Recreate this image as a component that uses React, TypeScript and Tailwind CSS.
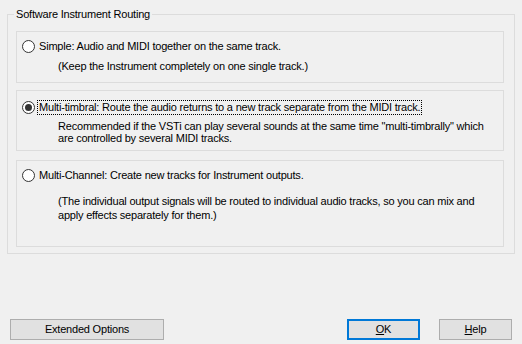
import React from 'react';

const Radio = ({ checked }: { checked?: boolean }) => (
  <svg width="13" height="13" viewBox="0 0 13 13" className="shrink-0">
    <circle cx="6.5" cy="6.5" r="6" fill="#ffffff" stroke="#333333" strokeWidth="1" />
    {checked && <circle cx="6.5" cy="6.5" r="3.5" fill="#333333" />}
  </svg>
);

const OptionBox = ({
  label,
  checked,
  focused,
  className,
  children,
}: {
  label: string;
  checked?: boolean;
  focused?: boolean;
  className: string;
  children: React.ReactNode;
}) => (
  <div className={`w-[488px] border border-[#dcdcdc] pl-[5px] ${className}`}>
    <div className="flex h-[15px] items-center gap-[2px]">
      <Radio checked={checked} />
      <span
        className={`leading-[13px] ${focused ? 'border border-dotted border-black px-[1px]' : 'border border-transparent px-[1px]'}`}
      >
        {label}
      </span>
    </div>
    {children}
  </div>
);

const Button = ({
  children,
  className,
}: {
  children: React.ReactNode;
  className: string;
}) => (
  <button
    className={`flex h-[21px] items-center justify-center bg-[#e1e1e1] text-black ${className}`}
  >
    {children}
  </button>
);

const App = () => {
  return (
    <div
      className="flex h-[344px] w-[522px] flex-col bg-[#f0f0f0] text-[11px] tracking-[-0.2px] text-black"
      style={{ fontFamily: '"Liberation Sans", Arial, sans-serif' }}
    >
      <fieldset className="mx-[7px] mt-[7px] h-[247px] border border-[#dcdcdc] pl-[8px]">
        <legend className="-ml-[2px] px-[2px] leading-[14px]">Software Instrument Routing</legend>
        <OptionBox label="Simple: Audio and MIDI together on the same track." className="mt-[10px] h-[52px] pt-[7px]">
          <p className="mt-[6px] pl-[36px] leading-[13px]">
            (Keep the Instrument completely on one single track.)
          </p>
        </OptionBox>
        <OptionBox
          label="Multi-timbral: Route the audio returns to a new track separate from the MIDI track."
          checked
          focused
          className="mt-[7px] h-[61px] pt-[9px]"
        >
          <p className="mt-[5px] pl-[36px] pr-[10px] leading-[12px]">
            Recommended if the VSTi can play several sounds at the same time "multi-timbrally" which are controlled by
            several MIDI tracks.
          </p>
        </OptionBox>
        <OptionBox
          label="Multi-Channel: Create new tracks for Instrument outputs."
          className="mt-[9px] h-[87px] pt-[7px]"
        >
          <p className="mt-[11px] pl-[36px] pr-[10px] leading-[14px]">
            (The individual output signals will be routed to individual audio tracks, so you can mix and apply effects
            separately for them.)
          </p>
        </OptionBox>
      </fieldset>
      <div className="flex-1" />
      <div className="mb-[4px] flex px-[10px]">
        <Button className="w-[154px] border border-[#adadad]">Extended Options</Button>
        <Button className="ml-auto w-[73px] border-2 border-[#0078d7]">
          <span className="underline">O</span>K
        </Button>
        <Button className="ml-[19px] w-[73px] border border-[#adadad]">
          <span className="underline">H</span>elp
        </Button>
      </div>
    </div>
  );
};

export default App;
